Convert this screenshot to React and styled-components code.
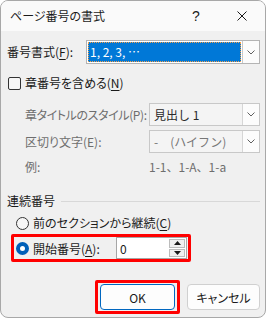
import React from 'react';
import styled, { createGlobalStyle } from 'styled-components';

const GlobalStyle = createGlobalStyle`
  html, body {
    margin: 0;
    padding: 0;
    background: #ffffff;
  }
  body {
    font-family: "Noto Sans CJK JP", "Noto Sans", sans-serif;
    font-size: 12px;
    color: #1a1a1a;
  }
`;

const Window = styled.div`
  width: 266px;
  height: 318px;
  box-sizing: border-box;
  border: 1px solid #a8a8a8;
  border-radius: 8px;
  overflow: hidden;
  background: #f0f0f0;
  display: flex;
  flex-direction: column;
`;

const TitleBar = styled.div`
  height: 30px;
  flex: none;
  display: flex;
  align-items: center;
  padding-left: 9px;
  background: #fafafa;
`;

const Title = styled.div`
  flex: 1;
  font-size: 12px;
  line-height: 16px;
  font-feature-settings: "palt";
  color: #1a1a1a;
`;

const TitleButton = styled.div`
  width: 46px;
  height: 30px;
  display: flex;
  align-items: center;
  justify-content: center;
  font-family: "Liberation Sans", sans-serif;
  font-size: 14px;
  color: #1a1a1a;
`;

const Body = styled.div`
  flex: 1;
  display: flex;
  flex-direction: column;
  padding: 9px 5px 0 6px;
`;

const Row = styled.div`
  display: flex;
  align-items: center;
  height: ${p => p.$h || 16}px;
  margin-top: ${p => p.$mt || 0}px;
  padding-left: ${p => p.$pl || 0}px;
  line-height: 16px;
`;

const Label = styled.span`
  flex: none;
  width: ${p => (p.$w ? `${p.$w}px` : 'auto')};
  color: ${p => (p.$disabled ? '#6e6e6e' : '#1a1a1a')};
  font-feature-settings: "palt";
  letter-spacing: ${p => (p.$tight ? '-0.4px' : '0')};
  white-space: nowrap;
`;

const Value = styled.span`
  color: #6e6e6e;
  font-size: 12px;
`;

const Combo = styled.div`
  flex: none;
  width: ${p => p.$w}px;
  height: ${p => p.$h}px;
  box-sizing: border-box;
  border: 1px solid ${p => (p.$disabled ? '#c8c8c8' : '#b4b4b4')};
  background: ${p => (p.$disabled ? '#f4f4f4' : '#ffffff')};
  display: flex;
  align-items: stretch;
`;

const ComboText = styled.div`
  flex: 1;
  display: flex;
  align-items: center;
  padding-left: ${p => (p.$selected ? 2 : 4)}px;
  margin: ${p => (p.$selected ? '1px' : '0')};
  background: ${p => (p.$selected ? '#0078d7' : 'transparent')};
  outline: ${p => (p.$selected ? '1px dotted #f5a04a' : 'none')};
  outline-offset: -1px;
  color: ${p => (p.$selected ? '#ffffff' : p.$grey ? '#777777' : '#2a2a2a')};
  white-space: pre;
`;

const ComboButton = styled.div`
  width: 16px;
  flex: none;
  background: #fcfcfc;
  border-left: 1px solid ${p => (p.$disabled ? '#d6d6d6' : '#c8c8c8')};
  display: flex;
  align-items: center;
  justify-content: center;
`;

const Checkbox = styled.div`
  width: 13px;
  height: 13px;
  box-sizing: border-box;
  border: 1px solid #333333;
  border-radius: 2px;
  background: #f6f6f6;
  margin-right: 4px;
  margin-left: 1px;
`;

const GroupLine = styled.div`
  flex: 1;
  height: 1px;
  background: #d8d8d8;
  margin-left: 6px;
`;

const Radio = styled.div`
  width: 13px;
  height: 13px;
  box-sizing: border-box;
  border-radius: 50%;
  flex: none;
  margin-right: 4px;
  border: ${p => (p.$checked ? '4px solid #005fb8' : '1px solid #333333')};
  background: ${p => (p.$checked ? '#ffffff' : '#f6f6f6')};
`;

const Highlight = styled.div`
  display: flex;
  align-items: center;
  box-sizing: border-box;
  border: 3px solid #ff0000;
  border-radius: 2px;
  padding: ${p => p.$pad};
  width: ${p => (p.$w ? `${p.$w}px` : 'auto')};
  margin-left: ${p => p.$ml || 0}px;
  margin-top: ${p => p.$mt || 0}px;
`;

const Spin = styled.div`
  width: 71px;
  height: 22px;
  box-sizing: border-box;
  border: 1px solid #a6a6a6;
  background: #ffffff;
  display: flex;
  align-items: stretch;
`;

const SpinText = styled.div`
  flex: 1;
  padding-left: 3px;
  display: flex;
  align-items: center;
  color: #1a1a1a;
`;

const SpinButtons = styled.div`
  width: 16px;
  display: flex;
  flex-direction: column;
  padding: 1px 1px 1px 0;
  gap: 1px;
`;

const SpinButton = styled.div`
  flex: 1;
  box-sizing: border-box;
  border: 1px solid #bcbcbc;
  background: #f0f0f0;
  display: flex;
  align-items: center;
  justify-content: center;
`;

const Footer = styled.div`
  display: flex;
  align-items: center;
  justify-content: flex-end;
  margin-top: 18px;
  gap: 7px;
`;

const Button = styled.div`
  width: ${p => p.$w}px;
  height: 26px;
  box-sizing: border-box;
  border: 1px solid ${p => (p.$primary ? '#0067c0' : '#d0d0d0')};
  border-radius: 4px;
  background: #fdfdfd;
  display: flex;
  align-items: center;
  justify-content: center;
  font-feature-settings: "palt";
  color: #1a1a1a;
`;

const U = styled.span`
  text-decoration: underline;
  text-underline-offset: 2px;
`;

const Chevron = () => (
  <svg width="8" height="5" viewBox="0 0 8 5">
    <path d="M0.5 0.5 L4 4 L7.5 0.5" fill="none" stroke="#606060" strokeWidth="1" />
  </svg>
);

const Tri = ({ up }) => (
  <svg width="7" height="4" viewBox="0 0 7 4">
    <path d={up ? 'M0 4 L3.5 0 L7 4 Z' : 'M0 0 L3.5 4 L7 0 Z'} fill="#1a1a1a" />
  </svg>
);

const CloseIcon = () => (
  <svg width="10" height="10" viewBox="0 0 10 10">
    <path d="M0.5 0.5 L9.5 9.5 M9.5 0.5 L0.5 9.5" stroke="#1a1a1a" strokeWidth="1" />
  </svg>
);

const App = () => (
  <>
    <GlobalStyle />
    <Window>
      <TitleBar>
        <Title>ページ番号の書式</Title>
        <TitleButton>?</TitleButton>
        <TitleButton>
          <CloseIcon />
        </TitleButton>
      </TitleBar>
      <Body>
        <Row $h={24}>
          <Label $w={79}>
            番号書式(<U>F</U>):
          </Label>
          <Combo $w={174} $h={24}>
            <ComboText $selected>1, 2, 3, …</ComboText>
            <ComboButton>
              <Chevron />
            </ComboButton>
          </Combo>
        </Row>

        <Row $mt={11}>
          <Checkbox />
          <Label>
            章番号を含める(<U>N</U>)
          </Label>
        </Row>

        <Row $h={23} $mt={12} $pl={18}>
          <Label $w={124} $disabled $tight>
            章タイトルのスタイル(P):
          </Label>
          <Combo $w={111} $h={23} $disabled>
            <ComboText>見出し 1</ComboText>
            <ComboButton $disabled>
              <Chevron />
            </ComboButton>
          </Combo>
        </Row>

        <Row $h={23} $mt={4} $pl={18}>
          <Label $w={124} $disabled>
            区切り文字(E):
          </Label>
          <Combo $w={111} $h={23} $disabled>
            <ComboText $grey>-　(ハイフン)</ComboText>
            <ComboButton $disabled>
              <Chevron />
            </ComboButton>
          </Combo>
        </Row>

        <Row $mt={6} $pl={18}>
          <Label $w={124} $disabled>
            例:
          </Label>
          <Value>1-1、1-A、1-a</Value>
        </Row>

        <Row $mt={18}>
          <Label>連続番号</Label>
          <GroupLine />
        </Row>

        <Row $mt={6} $pl={9}>
          <Radio />
          <Label>
            前のセクションから継続(<U>C</U>)
          </Label>
        </Row>

        <Highlight $w={180} $ml={4} $mt={3} $pad="0 1px 0 2px">
          <Radio $checked />
          <Label $w={83}>
            開始番号(<U>A</U>):
          </Label>
          <Spin>
            <SpinText>0</SpinText>
            <SpinButtons>
              <SpinButton>
                <Tri up />
              </SpinButton>
              <SpinButton>
                <Tri />
              </SpinButton>
            </SpinButtons>
          </Spin>
        </Highlight>

        <Footer>
          <Highlight $pad="1px 2px">
            <Button $w={75} $primary>
              OK
            </Button>
          </Highlight>
          <Button $w={73}>キャンセル</Button>
        </Footer>
      </Body>
    </Window>
  </>
);

export default App;
